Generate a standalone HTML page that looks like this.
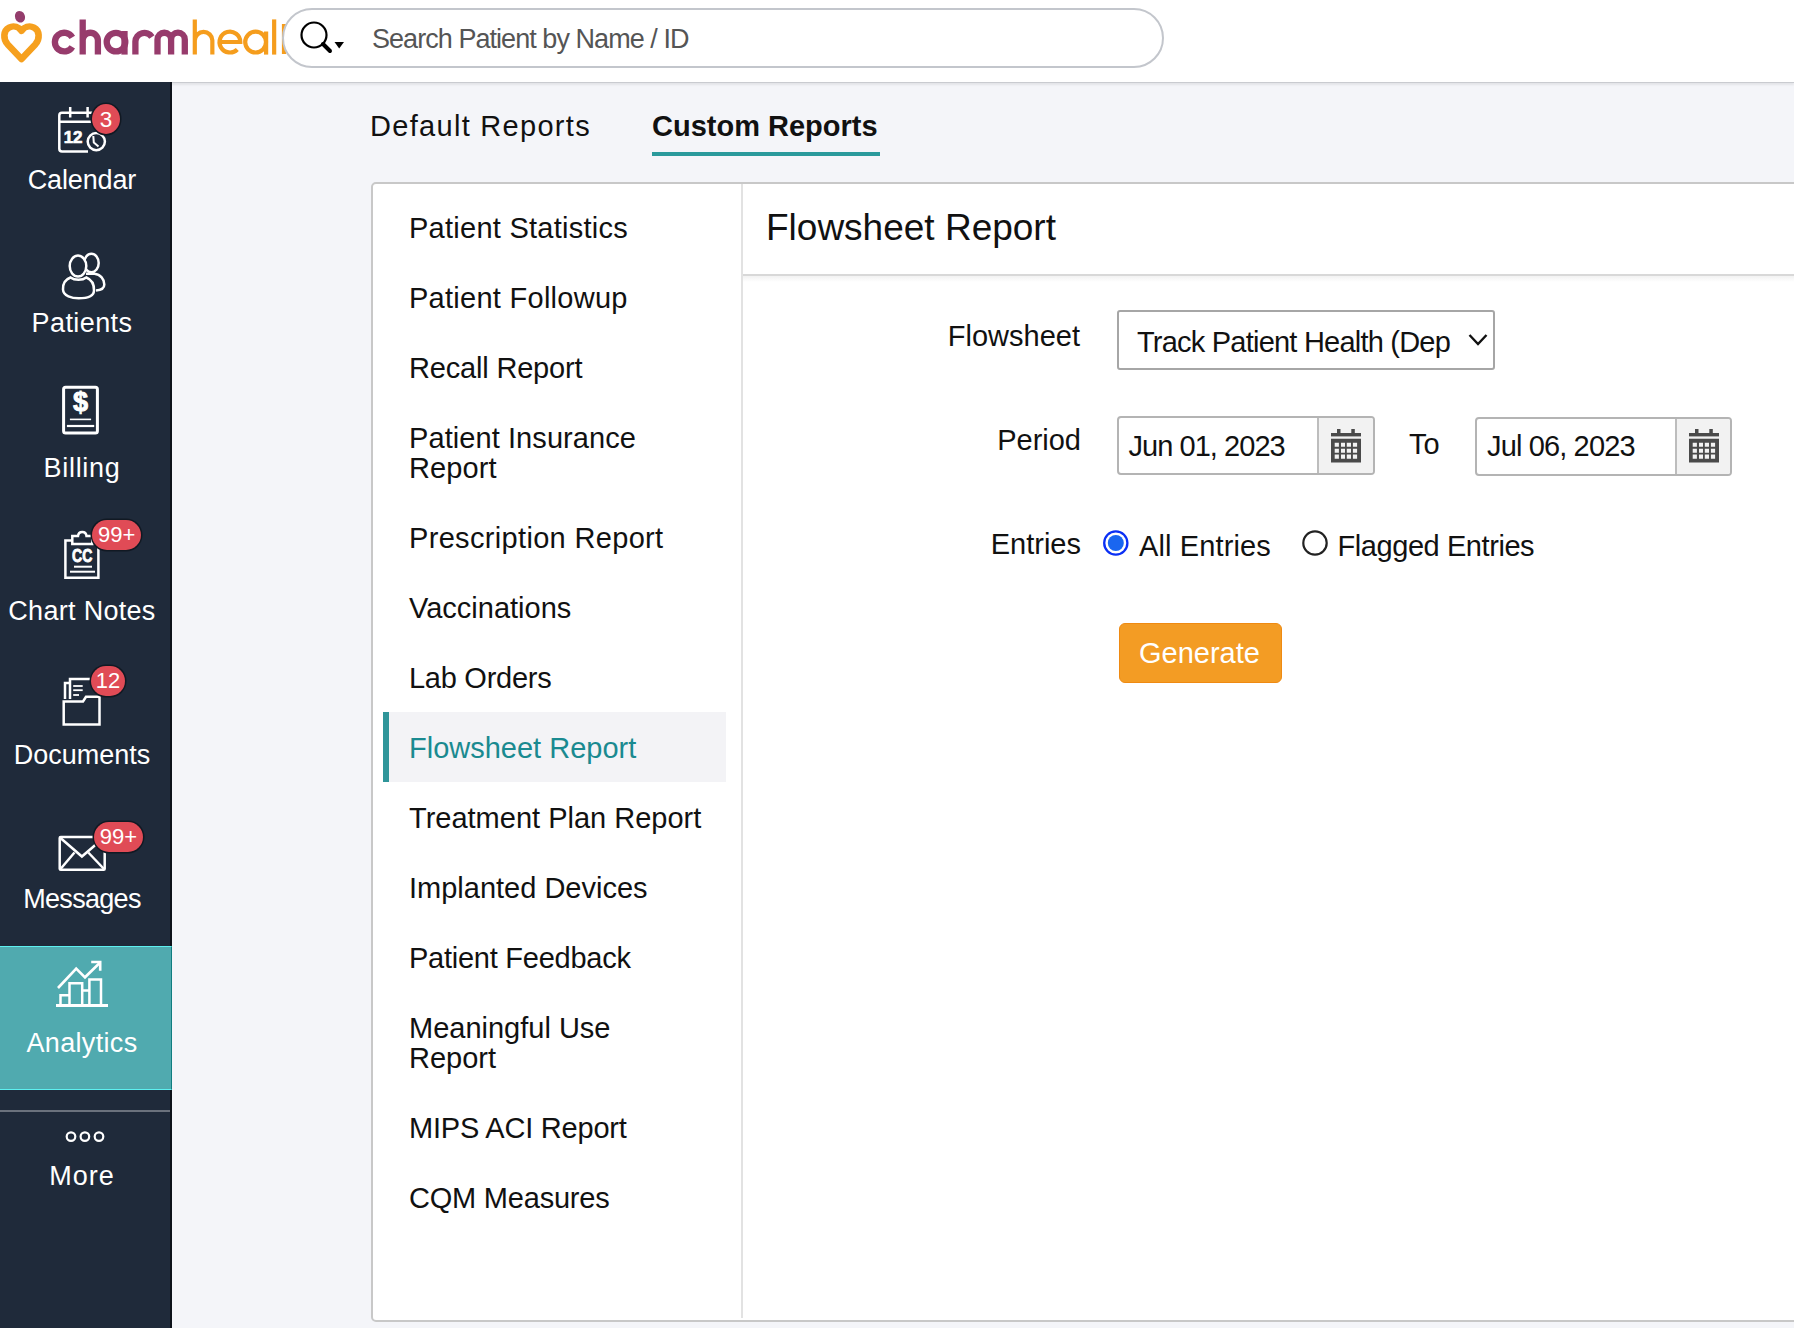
<!DOCTYPE html>
<html><head><meta charset="utf-8">
<style>
*{box-sizing:border-box;margin:0;padding:0}
html,body{width:1794px;height:1328px;overflow:hidden;background:#f4f5f9;font-family:"Liberation Sans",sans-serif;color:#111}
.a{position:absolute;white-space:nowrap}
#hdr{position:absolute;left:0;top:0;width:1794px;height:83px;background:#fff;border-bottom:1px solid #c9cbd0;box-shadow:0 1.5px 2px rgba(0,0,0,0.07)}
#search{position:absolute;left:282px;top:8px;width:882px;height:60px;border:2px solid #c3c6cc;border-radius:30px;background:#fff}
#side{position:absolute;left:0;top:82px;width:172px;height:1246px;background:#1f2a3a;border-right:2px solid #0d121a}
.sl{position:absolute;left:0;width:164px;text-align:center;color:#fff;font-size:27px;line-height:27px}
.badge{position:absolute;box-shadow:0 0 0 1.5px #111923;background:#e04b56;color:#fff;font-size:22px;line-height:30px;text-align:center;border-radius:15px;height:30px}
#card{position:absolute;left:371px;top:182px;width:1440px;height:1140px;background:#fff;border:2px solid #c8c8c8;border-radius:5px}
.mi{position:absolute;left:409px;font-size:29px;line-height:29px;color:#111;white-space:nowrap}
.act{color:#1a8a90}
.lbl{position:absolute;font-size:29px;line-height:29px;color:#111;white-space:nowrap}
</style></head><body>
<div id="hdr"></div>
<!-- logo -->
<svg width="290" height="82" viewBox="0 0 290 82" style="position:absolute;left:0;top:0" fill="none" stroke-linecap="butt">
 <ellipse cx="20" cy="16.8" rx="5" ry="5.9" transform="rotate(-22 20 16.8)" fill="#943d6c"/>
 <path d="M21.5 59 L7.5 44.2 C3 39 3.2 30.5 9 27.6 C14 25 19 27.2 21.5 30.8 C24 27.2 29 25 34 27.6 C39.8 30.5 40 39 35.5 44.2 Z" stroke="#f6a01e" stroke-width="6.6" stroke-linejoin="round"/>
 <g stroke="#973b6c" stroke-width="6.3">
  <path d="M72.3 37.4 A9.35 9.35 0 1 0 72.3 46.8"/>
  <path d="M82.7 19.4 V54.6 M82.7 40.35 A7.6 7.6 0 0 1 97.9 40.35 V54.6"/>
  <circle cx="116" cy="42.1" r="9.3"/>
  <path d="M124.5 31 V54.6"/>
  <path d="M135.4 54.6 V41.5 A9 9 0 0 1 151.9 37"/>
  <path d="M157.5 54.6 V39.55 A6.8 6.8 0 0 1 171.1 39.55 V54.6 M171.1 39.55 A6.85 6.85 0 0 1 184.8 39.55 V54.6"/>
 </g>
 <g stroke="#f59d1d" stroke-width="4.2">
  <path d="M194.8 19.4 V54.6 M194.8 40.4 A8.78 8.78 0 0 1 212.35 40.4 V54.6"/>
  <path d="M219.5 42 H240.3 A10.4 10.4 0 1 0 237.3 49.4"/>
  <circle cx="255.6" cy="42.1" r="10.4"/>
  <path d="M266.1 31.5 V54.6"/>
  <path d="M274.15 19.4 V54.6"/>
  <path d="M284 24 V54"/>
 </g>
</svg>
<div id="search">
 <svg width="60" height="40" style="position:absolute;left:14px;top:8px" viewBox="0 0 60 40">
  <circle cx="16" cy="17" r="12.5" fill="none" stroke="#000" stroke-width="2.2"/>
  <line x1="25" y1="26" x2="32" y2="33" stroke="#000" stroke-width="4" stroke-linecap="round"/>
  <path d="M36.5 24 L46 24 L41.2 30.5 Z" fill="#000"/>
 </svg>
 <div class="a" style="left:88px;top:16.2px;font-size:27px;line-height:27px;color:#555;letter-spacing:-0.95px">Search Patient by Name / ID</div>
</div>

<div id="side">
 <div style="position:absolute;left:0;top:864px;width:172px;height:144px;background:#50aaaf;border-top:1px solid #5ef0f0;border-bottom:1px solid #5ef0f0;border-right:1px solid #0f7d80"></div>
 <div style="position:absolute;left:0;top:1028px;width:170px;height:2px;background:#6a717c"></div>
</div>
<svg width="172" height="1246" viewBox="0 82 172 1246" style="position:absolute;left:0;top:82px" fill="none" stroke="#fff" stroke-width="2.5">
 <!-- calendar -->
 <path d="M88 151.5 L62 151.5 Q59.3 151.5 59.3 148.8 L59.3 115.5 Q59.3 112.8 62 112.8 L96 112.8"/>
 <line x1="59.3" y1="121.8" x2="94" y2="121.8"/>
 <line x1="70.2" y1="107" x2="70.2" y2="117.5"/>
 <line x1="87.6" y1="107" x2="87.6" y2="117.5"/>
 <text x="63.8" y="142.8" font-family="Liberation Sans" font-weight="bold" font-size="17" fill="#fff" stroke="#fff" stroke-width="0.7" letter-spacing="-0.3">12</text>
 <circle cx="96.3" cy="141.6" r="8.6"/>
 <path d="M93.3 136 L93.8 142.5 L98.5 146.5" stroke-width="2"/>
 <!-- patients -->
 <ellipse cx="91.4" cy="263" rx="7.3" ry="9.3"/>
 <path d="M86 273.8 L94.5 273.8 C100.5 274.5 104.3 279 104.3 284.5 C104.3 288.5 100.5 290.2 96 290.6"/>
 <ellipse cx="78" cy="266.1" rx="8.3" ry="10.5" fill="#1f2a3a"/>
 <path d="M70.5 277.5 C65 279.5 62.8 284.5 63 289.5 C63.2 296 72 298.3 78.7 298.3 C86 298.3 93.8 296.5 94 290.5 C94.2 284.5 91.5 279.6 86.3 277.5 C82.5 280.5 74.5 280.5 70.5 277.5 Z"/>
 <!-- billing -->
 <rect x="63.6" y="387.3" width="33.8" height="45.6" rx="2" stroke-width="3"/>
 <text x="80.5" y="411" text-anchor="middle" font-family="Liberation Sans" font-weight="bold" font-size="27" fill="#fff" stroke="#fff" stroke-width="0.9">$</text>
 <line x1="69.9" y1="419.4" x2="91.1" y2="419.4" stroke-width="1.6"/>
 <line x1="66.9" y1="426" x2="94.2" y2="426" stroke-width="2.2"/>
 <!-- chart notes -->
 <path d="M72 540.6 L65.4 540.6 L65.4 577.8 L98.4 577.8 L98.4 545"/>
 <path d="M72.3 544 L72.3 536 L78 536 C78.5 530.5 86 530.5 86.5 536 L92.3 536 L92.3 544 Z"/>
 <text x="72" y="562.1" font-family="Liberation Sans" font-weight="bold" font-size="19" fill="#fff" stroke="#fff" stroke-width="0.9" textLength="20.3" lengthAdjust="spacingAndGlyphs">CC</text>
 <line x1="74" y1="566.7" x2="92" y2="566.7" stroke-width="2"/>
 <line x1="70" y1="571.7" x2="95" y2="571.7" stroke-width="2"/>
 <!-- documents -->
 <path d="M63.7 701.5 L63.7 724.5 L99.5 724.5 L99.5 696.8 L86 696.8 L83 701.5 Z"/>
 <path d="M65 699 L65 683 L69.5 683"/>
 <path d="M70 699 L70 679 L92 679"/>
 <line x1="73.2" y1="686" x2="82.7" y2="686" stroke-width="1.8"/>
 <line x1="73.2" y1="690.2" x2="82.7" y2="690.2" stroke-width="1.8"/>
 <line x1="73.2" y1="695" x2="79" y2="695" stroke-width="1.8"/>
 <!-- messages -->
 <rect x="59.7" y="837.1" width="45" height="32.6" rx="1"/>
 <path d="M60.5 838 L81.9 856.5 L103.5 838"/>
 <line x1="60.5" y1="869" x2="74.5" y2="852.5"/>
 <line x1="104" y1="869" x2="88.3" y2="852.5"/>
 <!-- analytics -->
 <line x1="56" y1="1005.5" x2="108" y2="1005.5" stroke-width="2.8"/>
 <path d="M60.5 1005 L60.5 995.3 L69.5 995.3 M69.5 1005 L69.5 983.3 L82.2 983.3 L82.2 1005 M82.2 990.5 L89.4 990.5 M89.4 1005 L89.4 979.4 L101 979.4 L101 1005" stroke-width="2.5"/>
 <path d="M58 988 L76.2 968.5 L85 977.3 L99.6 963" stroke-width="2.6"/>
 <path d="M91.2 962 L100.2 962 L100.2 970.7" stroke-width="2.6"/>
 <!-- more -->
 <circle cx="71" cy="1136.6" r="4.3" stroke-width="2.2"/>
 <circle cx="84.9" cy="1136.6" r="4.3" stroke-width="2.2"/>
 <circle cx="99" cy="1136.6" r="4.3" stroke-width="2.2"/>
</svg>
<div class="badge" style="left:92px;top:104px;width:28px;height:30px;line-height:31px;border-radius:50%;font-size:22.5px">3</div>
<div class="badge" style="left:92.3px;top:520px;width:48.6px">99+</div>
<div class="badge" style="left:91px;top:665.8px;width:34.2px">12</div>
<div class="badge" style="left:94px;top:822px;width:48.9px">99+</div>
<div class="sl" style="top:167px;letter-spacing:-0.14px">Calendar</div>
<div class="sl" style="top:310.3px;letter-spacing:0.4px">Patients</div>
<div class="sl" style="top:455px;letter-spacing:0.7px">Billing</div>
<div class="sl" style="top:598.3px;letter-spacing:0.3px">Chart Notes</div>
<div class="sl" style="top:742.3px">Documents</div>
<div class="sl" style="top:886.2px;letter-spacing:-0.7px">Messages</div>
<div class="sl" style="top:1030.4px;letter-spacing:0.33px">Analytics</div>
<div class="sl" style="top:1162.6px;letter-spacing:1px">More</div>

<!-- tabs -->
<div class="a" style="left:370px;top:112px;font-size:29px;line-height:29px;color:#111;letter-spacing:1.3px">Default Reports</div>
<div class="a" style="left:652px;top:112px;font-size:29px;line-height:29px;color:#111;font-weight:bold">Custom Reports</div>
<div class="a" style="left:652px;top:152px;width:228px;height:4px;background:#2a9a9c"></div>

<div id="card">
 <div style="position:absolute;left:368px;top:0;width:2px;height:1134px;background:#e2e2e2"></div>
 <div style="position:absolute;left:370px;top:90px;width:1100px;height:2px;background:#d8d8d8"></div>
 <div style="position:absolute;left:370px;top:92px;width:1100px;height:6px;background:linear-gradient(#f2f2f2,#fff)"></div>
 <div style="position:absolute;left:10px;top:528px;width:343px;height:70px;background:#f3f3f6;border-left:6px solid #2f9599"></div>
</div>
<div class="mi" style="top:213.85px;letter-spacing:0.26px">Patient Statistics</div>
<div class="mi" style="top:283.85px;letter-spacing:0.27px">Patient Followup</div>
<div class="mi" style="top:353.85px;letter-spacing:-0.18px">Recall Report</div>
<div class="mi" style="top:422.85px;line-height:30px;letter-spacing:0.08px">Patient Insurance<br>Report</div>
<div class="mi" style="top:523.85px;letter-spacing:0.33px">Prescription Report</div>
<div class="mi" style="top:593.85px">Vaccinations</div>
<div class="mi" style="top:663.85px;letter-spacing:-0.27px">Lab Orders</div>
<div class="mi act" style="top:733.85px">Flowsheet Report</div>
<div class="mi" style="top:803.85px">Treatment Plan Report</div>
<div class="mi" style="top:873.85px">Implanted Devices</div>
<div class="mi" style="top:943.85px;letter-spacing:-0.25px">Patient Feedback</div>
<div class="mi" style="top:1012.85px;line-height:30px">Meaningful Use<br>Report</div>
<div class="mi" style="top:1113.85px;letter-spacing:-0.21px">MIPS ACI Report</div>
<div class="mi" style="top:1183.85px;letter-spacing:-0.21px">CQM Measures</div>

<div class="lbl" style="left:766px;top:209.2px;font-size:37px;line-height:37px">Flowsheet Report</div>
<div class="lbl" style="right:714px;top:322.35px">Flowsheet</div>
<div class="lbl" style="right:713px;top:425.55px">Period</div>
<div class="lbl" style="right:713px;top:530.35px">Entries</div>
<div class="a" style="left:1117px;top:310px;width:378px;height:60px;border:2px solid #a6a6a6;border-radius:3px;background:#fff"></div>
<div class="lbl" style="left:1137px;letter-spacing:-0.78px;top:328.35px">Track Patient Health (Dep</div>
<svg width="20" height="14" style="position:absolute;left:1468px;top:333px" viewBox="0 0 20 14"><path d="M1.5 2 L10 11 L18.5 2" fill="none" stroke="#111" stroke-width="2.4"/></svg>

<div class="a" style="left:1117px;top:416px;width:258px;height:59px;border:2px solid #b4b4b4;border-radius:4px;background:#fff;overflow:hidden"><div style="position:absolute;left:198px;top:0;width:58px;height:55px;background:#f2f2f2;border-left:2px solid #bdbdbd"></div></div>
<div class="lbl" style="left:1128.5px;letter-spacing:-0.95px;top:432.35px">Jun 01, 2023</div>
<div style="position:absolute;left:1331px;top:429px"><svg width="30" height="34" viewBox="0 0 30 34" style="position:absolute" fill="#4a4a4a">
 <rect x="0" y="4" width="30" height="3.4"/><rect x="6" y="0" width="3.5" height="4.5"/><rect x="20.3" y="0" width="3.5" height="4.5"/>
 <path fill-rule="evenodd" d="M0 9.8 H30 V33.5 H0 Z M3.7 13.7 v4 h4.2 v-4 z M10 13.7 v4 h4 v-4 z M15.8 13.7 v4 h4.2 v-4 z M21.9 13.7 v4 h4.2 v-4 z M3.7 19.8 v4 h4.2 v-4 z M10 19.8 v4 h4 v-4 z M15.8 19.8 v4 h4.2 v-4 z M21.9 19.8 v4 h4.2 v-4 z M3.7 25.6 v4.2 h4.2 v-4.2 z M10 25.6 v4.2 h4 v-4.2 z M15.8 25.6 v4.2 h4.2 v-4.2 z M21.9 25.6 v4.2 h4.2 v-4.2 z"/>
</svg></div>
<div class="lbl" style="left:1409px;top:429.95px">To</div>
<div class="a" style="left:1475px;top:416.5px;width:257px;height:59px;border:2px solid #b4b4b4;border-radius:4px;background:#fff;overflow:hidden"><div style="position:absolute;left:198px;top:0;width:58px;height:55px;background:#f2f2f2;border-left:2px solid #bdbdbd"></div></div>
<div class="lbl" style="left:1487px;letter-spacing:-0.86px;top:432.15px">Jul 06, 2023</div>
<div style="position:absolute;left:1689px;top:429px"><svg width="30" height="34" viewBox="0 0 30 34" style="position:absolute" fill="#4a4a4a">
 <rect x="0" y="4" width="30" height="3.4"/><rect x="6" y="0" width="3.5" height="4.5"/><rect x="20.3" y="0" width="3.5" height="4.5"/>
 <path fill-rule="evenodd" d="M0 9.8 H30 V33.5 H0 Z M3.7 13.7 v4 h4.2 v-4 z M10 13.7 v4 h4 v-4 z M15.8 13.7 v4 h4.2 v-4 z M21.9 13.7 v4 h4.2 v-4 z M3.7 19.8 v4 h4.2 v-4 z M10 19.8 v4 h4 v-4 z M15.8 19.8 v4 h4.2 v-4 z M21.9 19.8 v4 h4.2 v-4 z M3.7 25.6 v4.2 h4.2 v-4.2 z M10 25.6 v4.2 h4 v-4.2 z M15.8 25.6 v4.2 h4.2 v-4.2 z M21.9 25.6 v4.2 h4.2 v-4.2 z"/>
</svg></div>

<svg width="30" height="30" style="position:absolute;left:1101px;top:528px" viewBox="0 0 30 30"><circle cx="14.8" cy="15" r="11.6" fill="#fff" stroke="#0a2ff5" stroke-width="2.3"/><circle cx="14.8" cy="15" r="8" fill="#1a66f0"/></svg>
<div class="lbl" style="left:1139px;letter-spacing:0.13px;top:531.55px">All Entries</div>
<svg width="30" height="30" style="position:absolute;left:1300px;top:528px" viewBox="0 0 30 30"><circle cx="15" cy="15" r="11.7" fill="#fff" stroke="#222" stroke-width="2.2"/></svg>
<div class="lbl" style="left:1337.5px;letter-spacing:-0.43px;top:531.55px">Flagged Entries</div>

<div class="a" style="left:1119px;top:623px;width:163px;height:60px;background:#f39c24;border:1px solid #ef8a12;border-radius:6px"></div>
<div class="lbl" style="left:1139px;top:639.1px;color:#fff;font-size:29px;line-height:29px">Generate</div>
</body></html>
